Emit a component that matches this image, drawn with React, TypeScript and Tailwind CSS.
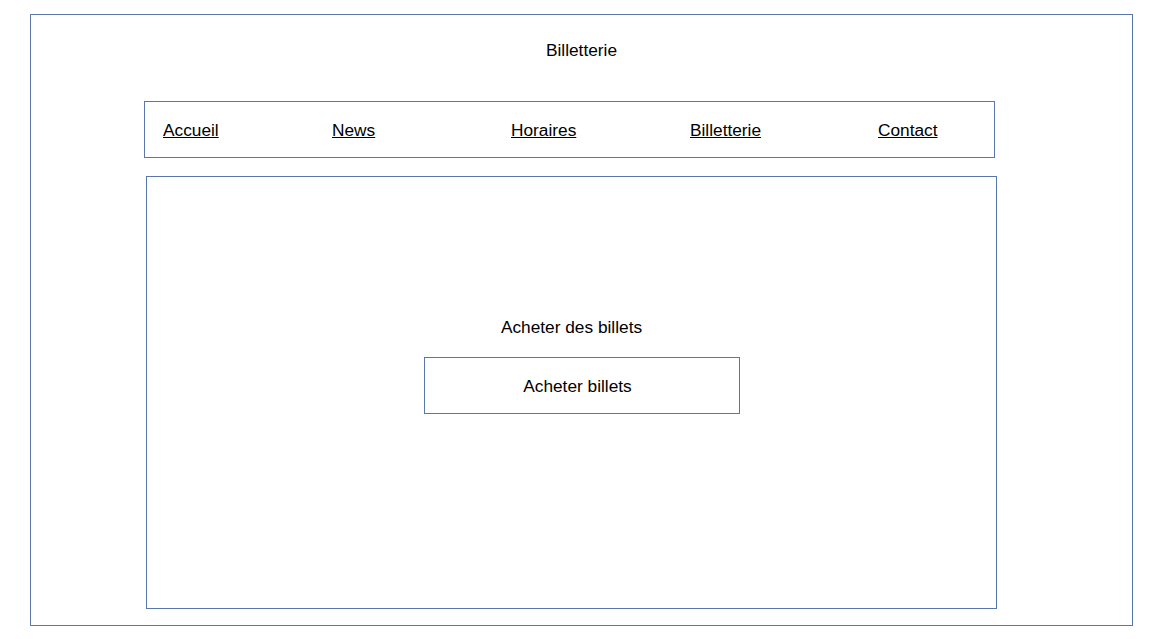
import React from "react";

export default function App() {
  const font = { fontFamily: '"Liberation Sans", Arial, sans-serif' };
  return (
    <div className="w-[1150px] h-[639px] bg-white overflow-hidden" style={font}>
      <div className="ml-[30px] mt-[14px] w-[1103px] h-[612px] border-[1.5px] border-[#5a77ad] flex flex-col text-[17.3px] text-black">
        <div className="h-[86px] pt-[25px] text-center leading-[20px]">Billetterie</div>
        <nav className="ml-[113px] w-[851px] h-[57px] border-[1.5px] border-[#5a77ad] flex items-center pl-[18px] leading-[20px]">
          <div className="w-[169px]"><a href="#" className="underline">Accueil</a></div>
          <div className="w-[179px]"><a href="#" className="underline">News</a></div>
          <div className="w-[179px]"><a href="#" className="underline">Horaires</a></div>
          <div className="w-[188px]"><a href="#" className="underline">Billetterie</a></div>
          <div><a href="#" className="underline">Contact</a></div>
        </nav>
        <div className="ml-[115px] mt-[18px] w-[851px] h-[433px] border-[1.5px] border-[#5a77ad] flex flex-col pt-[140px] leading-[20px]">
          <div className="text-center">Acheter des billets</div>
          <button className="mt-[20px] ml-[277px] w-[316px] h-[57px] border-[1.5px] border-[#5a77ad] bg-white text-[17.3px] text-center">
            <span className="mr-[9px]">Acheter billets</span>
          </button>
        </div>
      </div>
    </div>
  );
}
